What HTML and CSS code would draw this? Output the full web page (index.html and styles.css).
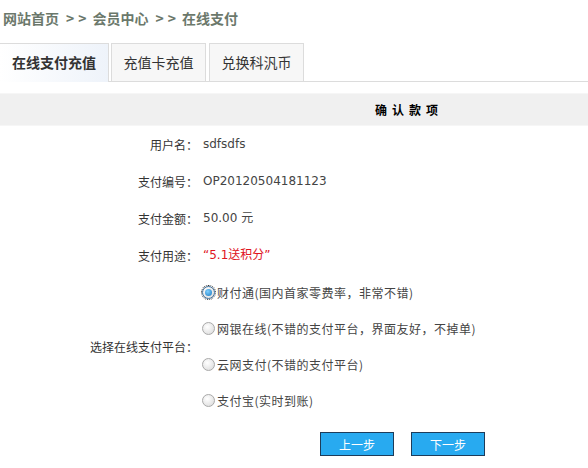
FILE: index.html
```html
<!DOCTYPE html>
<html lang="zh-CN">
<head>
<meta charset="utf-8">
<title>在线支付</title>
<link rel="stylesheet" href="styles.css">
</head>
<body>
<div class="crumb">网站首页<span class="sep">&gt;&gt;</span>会员中心<span class="sep">&gt;&gt;</span>在线支付</div>
<div class="tabs">
  <div class="tab active">在线支付充值</div>
  <div class="tab">充值卡充值</div>
  <div class="tab">兑换科汎币</div>
</div>
<div class="form">
  <div class="head">确认款项</div>
  <div class="label">用户名：</div><div class="value">sdfsdfs</div>
  <div class="label">支付编号：</div><div class="value">OP20120504181123</div>
  <div class="label">支付金额：</div><div class="value">50.00 元</div>
  <div class="label">支付用途：</div><div class="value red">“5.1送积分”</div>
  <div class="label tall">选择在线支付平台：</div>
  <div class="options">
    <label class="opt"><span class="radio checked"></span>财付通(国内首家零费率，非常不错)</label>
    <label class="opt"><span class="radio"></span>网银在线(不错的支付平台，界面友好，不掉单)</label>
    <label class="opt"><span class="radio"></span>云网支付(不错的支付平台)</label>
    <label class="opt"><span class="radio"></span>支付宝(实时到账)</label>
  </div>
  <div class="buttons">
    <button class="btn">上一步</button>
    <button class="btn">下一步</button>
  </div>
</div>
</body>
</html>
```
FILE: styles.css
```css
* { box-sizing: border-box; }
body {
  margin: 0;
  background: #fff;
  font-family: "DejaVu Sans", "Noto Sans CJK SC", sans-serif;
  font-size: 12px;
  color: #333;
}
.crumb {
  height: 36px;
  padding: 9px 0 0 3px;
  font-family: "Noto Sans CJK SC", sans-serif;
  font-size: 14px;
  font-weight: bold;
  color: #6b786b;
  line-height: 18px;
}
.sep {
  letter-spacing: 4px;
  margin: 0 2px 0 7px;
}
.tabs {
  display: flex;
  gap: 3px;
  padding-top: 7px;
  border-bottom: 1px solid #dcdcdc;
  height: 46px;
}
.tab {
  width: 95px;
  height: 38px;
  border: 1px solid #dcdcdc;
  border-bottom: none;
  background: #f7f7f7;
  font-family: "Noto Sans CJK SC", sans-serif;
  font-size: 14px;
  color: #333;
  line-height: 36px;
  text-align: center;
}
.tab.active {
  width: 109px;
  border-left: none;
  background: linear-gradient(90deg, #ffffff, #eef3fa);
  font-weight: bold;
  height: 39px;
  margin-right: -1px;
}
.form {
  display: grid;
  grid-template-columns: 200px 1fr;
  padding-top: 11px;
}
.head {
  grid-column: 1 / 3;
  height: 33px;
  background: #f0f0f0;
  border-top: 1px solid #f6f6f6;
  border-bottom: 1px solid #f6f6f6;
  padding-left: 230px;
  text-align: center;
  font-family: "Noto Sans CJK SC", sans-serif;
  font-weight: bold;
  letter-spacing: 5px;
  color: #000;
  line-height: 31px;
}
.label, .value {
  height: 37px;
  line-height: 37px;
}
.label {
  text-align: right;
  padding-right: 2px;
  font-family: "Noto Sans CJK SC", sans-serif;
  color: #333;
}
.value { padding-left: 3px; color: #444; }
.red { color: #e0141e; }
.label.tall {
  height: auto;
  display: flex;
  align-items: center;
  justify-content: flex-end;
}
.options {
  display: flex;
  flex-direction: column;
}
.opt {
  height: 36px;
  display: flex;
  align-items: center;
  font-family: "Noto Sans CJK SC", sans-serif;
  color: #444;
  padding-left: 2px;
  letter-spacing: 0.5px;
}
.radio {
  width: 13px;
  height: 13px;
  border-radius: 50%;
  border: 1px solid #a9a9a9;
  background: radial-gradient(circle at 40% 35%, #fff, #d8d8d8);
  margin-right: 2px;
  flex: none;
  position: relative;
}
.radio.checked {
  border-color: #3c6f9c;
  outline: 1px dotted #333;
  outline-offset: 0;
}
.radio.checked::after {
  content: "";
  position: absolute;
  left: 2px;
  top: 2px;
  width: 7px;
  height: 7px;
  border-radius: 50%;
  background: radial-gradient(circle at 40% 35%, #7fd0ff, #1a78c0);
}
.buttons {
  grid-column: 2;
  display: flex;
  gap: 17px;
  padding: 14px 0 0 120px;
}
.btn {
  width: 74px;
  height: 24px;
  background: #28aaf0;
  border: 1px solid #1d3c5a;
  color: #fff;
  font-family: "Noto Sans CJK SC", sans-serif;
  font-size: 12px;
  padding: 0;
}
```
